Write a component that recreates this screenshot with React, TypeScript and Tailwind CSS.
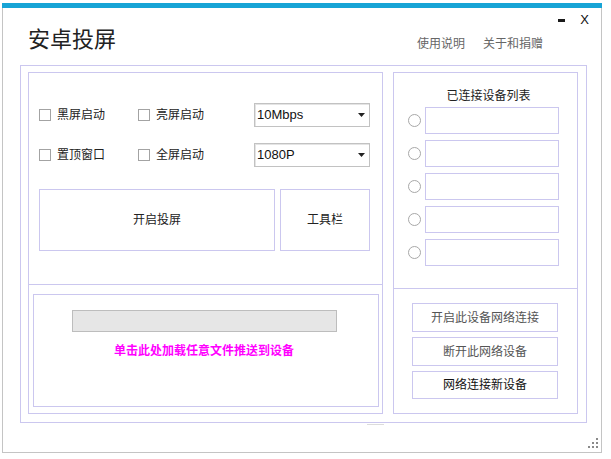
import React from 'react';

const Checkbox: React.FC<{ label: string; className?: string }> = ({ label, className }) => (
    <div className={`flex items-center ${className ?? ''}`}>
        <div className="w-[12px] h-[12px] border border-[#a3a3a3] bg-white" />
        <span className="ml-[6px] text-[12px] leading-[16px] text-[#222]">{label}</span>
    </div>
);

const Select: React.FC<{ value: string }> = ({ value }) => (
    <div className="w-[116px] h-[24px] border border-[#c2c2c2] shadow-[inset_1px_1px_0_#e4e4e4] bg-white flex items-center pl-[2px] pr-[4px]">
        <span className="flex-1 text-[13px] leading-[16px] text-[#111]">{value}</span>
        <svg width="7" height="4" viewBox="0 0 7 4">
            <path d="M0 0h7L3.5 4z" fill="#222" />
        </svg>
    </div>
);

const App: React.FC = () => {
    const devices = [0, 1, 2, 3, 4];

    return (
        <div className="min-h-screen bg-white pt-[3px] pl-[2px] font-['Liberation_Sans','Noto_Sans_CJK_SC',sans-serif] text-[#222]">
            <div className="w-[600px] h-[450px] border-x border-b border-[#c4c4c4] bg-white flex flex-col">
                {/* Title bar strip */}
                <div className="h-[5px] bg-[#17a4d6] -mx-px" />

                {/* Window controls */}
                <div className="h-[20px] flex justify-end items-start pr-[12px]">
                    <div className="mt-[11px] w-[7px] h-[3px] bg-[#1a1a1a]" />
                    <span className="ml-[15px] mt-[5px] text-[13px] leading-[13px] text-[#111]">X</span>
                </div>

                {/* Header */}
                <div className="h-[37px] flex items-start pl-[25px] pr-[58px]">
                    <h1 className="text-[22px] leading-[24px] font-normal text-[#222]">安卓投屏</h1>
                    <div className="ml-auto mt-[8px] flex gap-[18px] text-[12px] leading-[16px] text-[#666]">
                        <span>使用说明</span>
                        <span>关于和捐赠</span>
                    </div>
                </div>

                {/* Main frame */}
                <div className="ml-[17px] w-[567px] h-[358px] border border-[#cbc7ef] pt-[6px] pl-[7px] flex gap-[10px]">
                    {/* Left panel */}
                    <div className="w-[355px] h-[342px] border border-[#cbc7ef] flex flex-col">
                        <div className="h-[211px] pl-[10px] pt-[30px] flex flex-col">
                            <div className="flex items-center h-[24px]">
                                <Checkbox label="黑屏启动" className="w-[99px]" />
                                <Checkbox label="亮屏启动" className="w-[116px]" />
                                <Select value="10Mbps" />
                            </div>
                            <div className="flex items-center h-[24px] mt-[16px]">
                                <Checkbox label="置顶窗口" className="w-[99px]" />
                                <Checkbox label="全屏启动" className="w-[116px]" />
                                <Select value="1080P" />
                            </div>
                            <div className="flex gap-[5px] mt-[22px]">
                                <button className="w-[236px] h-[62px] border border-[#cbc7ef] bg-white text-[12px] text-[#222]">
                                    开启投屏
                                </button>
                                <button className="w-[90px] h-[62px] border border-[#cbc7ef] bg-white text-[12px] text-[#222]">
                                    工具栏
                                </button>
                            </div>
                        </div>
                        <div className="h-px bg-[#cbc7ef]" />
                        <div className="h-[128px] pt-[9px] pl-[4px] pr-[3px]">
                            <div className="h-[113px] border border-[#cbc7ef] flex flex-col pt-[15px]">
                                <div className="ml-[38px] w-[265px] h-[22px] bg-[#e6e6e6] border border-[#bdbdbd]" />
                                <span className="mt-[11px] pr-[4px] text-center text-[12px] leading-[16px] font-bold text-[#ff00ff]">
                                    单击此处加载任意文件推送到设备
                                </span>
                            </div>
                        </div>
                    </div>

                    {/* Right panel */}
                    <div className="w-[185px] h-[342px] border border-[#cbc7ef] flex flex-col">
                        <div className="h-[215px] pt-[15px] flex flex-col">
                            <div className="text-center text-[12px] leading-[16px] text-[#222] pl-[6px]">已连接设备列表</div>
                            <div className="mt-[3px] flex flex-col gap-[6px] pl-[14px]">
                                {devices.map((d) => (
                                    <div key={d} className="flex items-center">
                                        <div className="w-[13px] h-[13px] rounded-full border border-[#a8a8a8] bg-white" />
                                        <div className="ml-[4px] w-[134px] h-[27px] border border-[#cbc7ef] bg-white" />
                                    </div>
                                ))}
                            </div>
                        </div>
                        <div className="h-px bg-[#cbc7ef]" />
                        <div className="h-[124px] pt-[14px] pl-[18px] flex flex-col gap-[5px]">
                            <button className="w-[146px] h-[29px] border border-[#cbc7ef] bg-white text-[12px] text-[#555]">
                                开启此设备网络连接
                            </button>
                            <button className="w-[146px] h-[29px] border border-[#cbc7ef] bg-white text-[12px] text-[#555]">
                                断开此网络设备
                            </button>
                            <button className="w-[146px] h-[28px] border border-[#cbc7ef] bg-white text-[12px] text-[#111]">
                                网络连接新设备
                            </button>
                        </div>
                    </div>
                </div>

                {/* Footer strip with resize grip */}
                <div className="flex-1 flex flex-col">
                    <div className="ml-[364px] mt-[1px] w-[17px] h-px bg-[#dcdcdc]" />
                    <svg className="self-end mt-[13px] mr-[3px]" width="10" height="10" viewBox="0 0 10 10">
                        <rect x="8" y="0" width="2" height="2" fill="#8a8a8a" />
                        <rect x="4" y="4" width="2" height="2" fill="#8a8a8a" />
                        <rect x="8" y="4" width="2" height="2" fill="#8a8a8a" />
                        <rect x="0" y="8" width="2" height="2" fill="#8a8a8a" />
                        <rect x="4" y="8" width="2" height="2" fill="#8a8a8a" />
                        <rect x="8" y="8" width="2" height="2" fill="#8a8a8a" />
                    </svg>
                </div>
            </div>
        </div>
    );
};

export default App;
